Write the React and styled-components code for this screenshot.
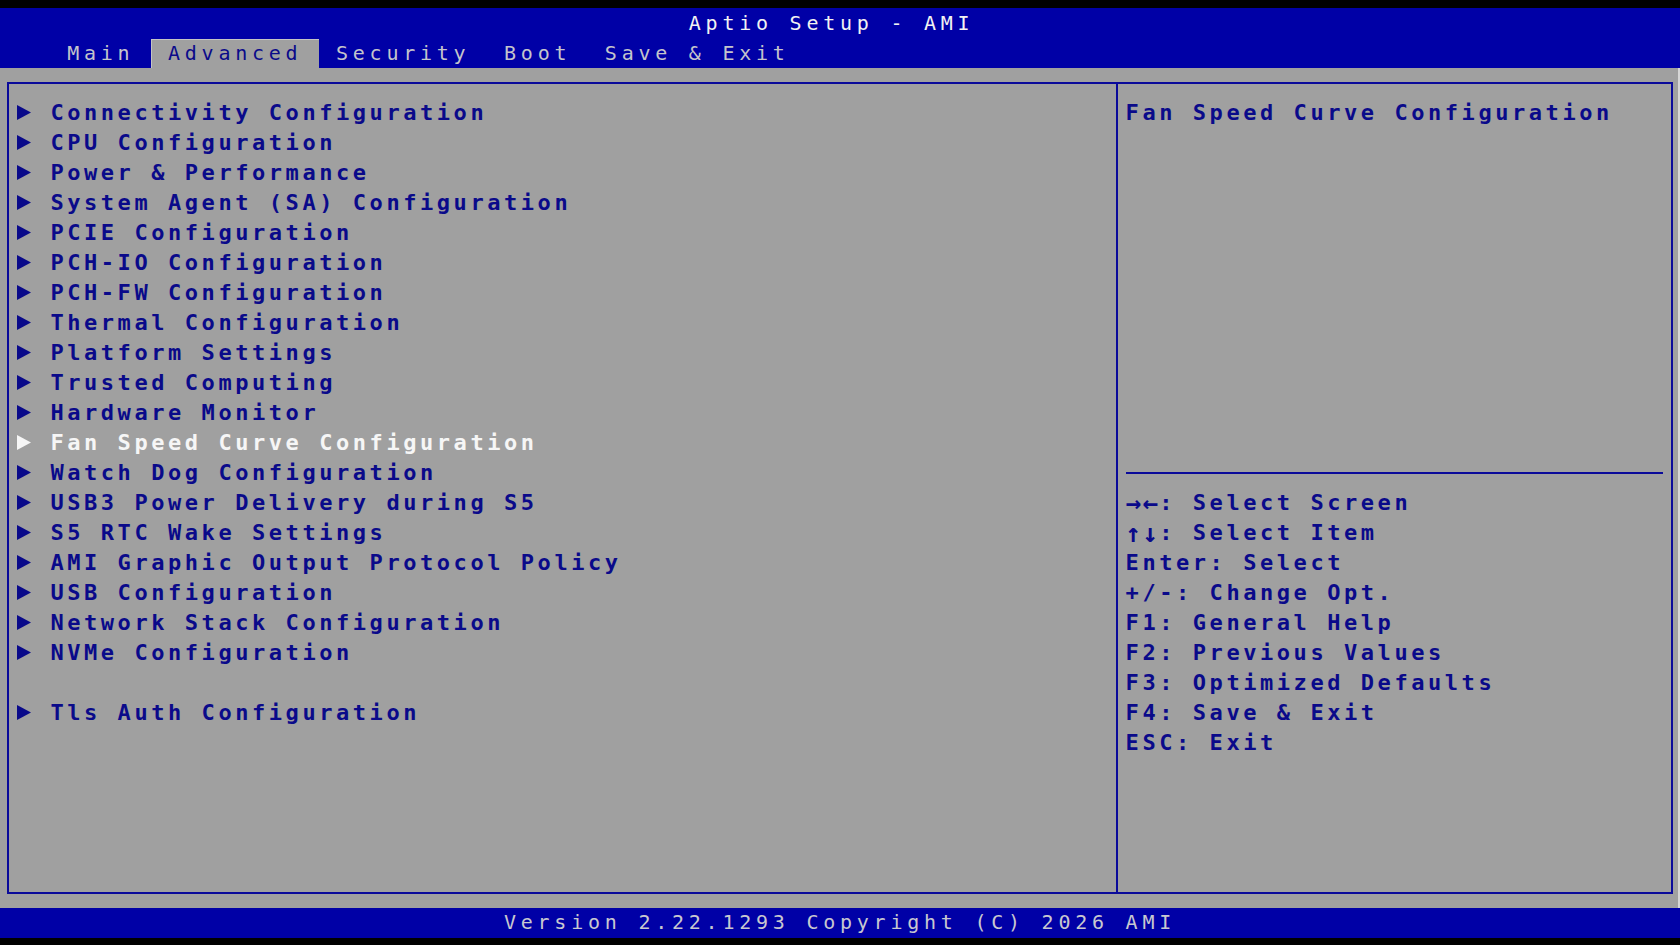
import React from 'react';
import styled, { createGlobalStyle } from 'styled-components';

// BIOS text grid: 100 columns x 30px rows on a 1680x945 screen
const CELL = 16.8;
const ROW = 30;

const menuItems = [
    'Connectivity Configuration',
    'CPU Configuration',
    'Power & Performance',
    'System Agent (SA) Configuration',
    'PCIE Configuration',
    'PCH-IO Configuration',
    'PCH-FW Configuration',
    'Thermal Configuration',
    'Platform Settings',
    'Trusted Computing',
    'Hardware Monitor',
    'Fan Speed Curve Configuration',
    'Watch Dog Configuration',
    'USB3 Power Delivery during S5',
    'S5 RTC Wake Settings',
    'AMI Graphic Output Protocol Policy',
    'USB Configuration',
    'Network Stack Configuration',
    'NVMe Configuration',
    null,
    'Tls Auth Configuration',
];

const tabs = ['Main', 'Advanced', 'Security', 'Boot', 'Save & Exit'];

const keyHelp = [
    ['→←', ': Select Screen'],
    ['↑↓', ': Select Item'],
    ['', 'Enter: Select'],
    ['', '+/-: Change Opt.'],
    ['', 'F1: General Help'],
    ['', 'F2: Previous Values'],
    ['', 'F3: Optimized Defaults'],
    ['', 'F4: Save & Exit'],
    ['', 'ESC: Exit'],
];

const GlobalStyle = createGlobalStyle`
    html, body {
        margin: 0;
        padding: 0;
        background: #000;
    }
    body {
        font-family: "DejaVu Sans Mono", "Liberation Mono", monospace;
    }
`;

const Screen = styled.div`
    width: 1680px;
    height: 945px;
    box-sizing: border-box;
    padding: 7.5px 0;
    background: #000;
    display: flex;
    flex-direction: column;
    overflow: hidden;
`;

const Header = styled.header`
    background: #0000a6;
    display: flex;
    flex-direction: column;
`;

const ThinText = styled.div`
    height: ${ROW}px;
    line-height: ${ROW}px;
    font-size: 20px;
    letter-spacing: ${CELL - 20 * 0.602}px;
    white-space: pre;
`;

const Title = styled(ThinText)`
    color: #f2f2f2;
    text-align: center;
    padding-right: ${CELL}px;
    line-height: ${ROW + 1}px;
`;

const TabBar = styled.nav`
    display: flex;
    height: ${ROW}px;
    padding-left: ${CELL * 3}px;
`;

const Tab = styled(ThinText)`
    padding: 0 ${CELL}px;
    color: ${(p) => (p.$active ? '#0a0a8a' : '#c4c4cc')};
    background: ${(p) => (p.$active ? '#a0a0a0' : 'transparent')};
    box-shadow: ${(p) => (p.$active ? 'inset 1px 1px 0 #c4c4c4' : 'none')};
    margin-top: 1px;
    height: ${ROW - 1}px;
    line-height: ${ROW - 1}px;
`;

const Body = styled.main`
    height: ${ROW * 28}px;
    box-sizing: border-box;
    background: #a0a0a0;
    padding: 14px 7.4px;
    box-shadow: inset -2px 0 0 #d6d6d6;
`;

const Frame = styled.div`
    height: 100%;
    box-sizing: border-box;
    border: 2px solid #0a0a9a;
    display: flex;
`;

const MenuPanel = styled.section`
    flex: 0 0 1108.8px;
    box-sizing: border-box;
    border-right: 2px solid #0a0a9a;
    padding: 14px 7.4px;
`;

const HelpPanel = styled.aside`
    flex: 1;
    padding: 14px 7.4px;
    display: flex;
    flex-direction: column;
`;

const Line = styled.div`
    height: ${ROW}px;
    line-height: ${ROW}px;
    font-size: 22px;
    font-weight: bold;
    letter-spacing: ${CELL - 22 * 0.602}px;
    white-space: pre;
    color: ${(p) => (p.$selected ? '#f6f6f6' : '#0a0a8a')};
`;

const MenuRow = styled(Line)`
    display: flex;
    align-items: center;
`;

const Arrow = styled.span`
    width: ${CELL * 2}px;
    display: flex;
    align-items: center;
    svg {
        display: block;
    }
`;

const KeyArrows = styled.span`
    display: inline-block;
    font-size: 26px;
    letter-spacing: ${CELL - 26 * 0.602}px;
    vertical-align: top;
`;

const HelpTop = styled.div`
    height: ${ROW * 12}px;
`;

const Divider = styled.div`
    height: 2px;
    background: #0a0a9a;
    margin: 14px 0;
`;

const Footer = styled.footer`
    background: #0000a6;
`;

const FooterText = styled(ThinText)`
    color: #c8c8d0;
    text-align: center;
    line-height: ${ROW - 2}px;
`;

const Triangle = ({ color }) => (
    <svg width="15" height="15" viewBox="0 0 15 15">
        <polygon points="0,0 14,7.5 0,15" fill={color} />
    </svg>
);

const App = () => {
    const selected = 'Fan Speed Curve Configuration';
    return (
        <>
            <GlobalStyle />
            <Screen>
                <Header>
                    <Title>Aptio Setup - AMI</Title>
                    <TabBar>
                        {tabs.map((t) => (
                            <Tab key={t} $active={t === 'Advanced'}>
                                {t}
                            </Tab>
                        ))}
                    </TabBar>
                </Header>
                <Body>
                    <Frame>
                        <MenuPanel>
                            {menuItems.map((item, i) =>
                                item ? (
                                    <MenuRow key={i} $selected={item === selected}>
                                        <Arrow>
                                            <Triangle color={item === selected ? '#f6f6f6' : '#0a0a8a'} />
                                        </Arrow>
                                        {item}
                                    </MenuRow>
                                ) : (
                                    <Line key={i} />
                                )
                            )}
                        </MenuPanel>
                        <HelpPanel>
                            <HelpTop>
                                <Line>Fan Speed Curve Configuration</Line>
                            </HelpTop>
                            <Divider />
                            {keyHelp.map(([arrows, text]) => (
                                <Line key={text}>
                                    {arrows && <KeyArrows>{arrows}</KeyArrows>}
                                    {text}
                                </Line>
                            ))}
                        </HelpPanel>
                    </Frame>
                </Body>
                <Footer>
                    <FooterText>Version 2.22.1293 Copyright (C) 2026 AMI</FooterText>
                </Footer>
            </Screen>
        </>
    );
};

export default App;
